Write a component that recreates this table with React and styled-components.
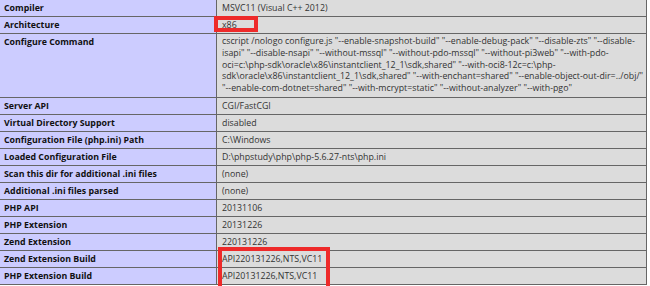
import styled, {createGlobalStyle} from "styled-components";

const GlobalStyle = createGlobalStyle`
  html, body {
    margin: 0;
    padding: 0;
    background: #fff;
    overflow: hidden;
  }
`;

const Page = styled.div`
  position: relative;
  width: 650px;
  height: 286px;
  overflow: hidden;
  font-family: "Open Sans", "Noto Sans", sans-serif;
  font-size: 8.8px;
`;

const InfoTable = styled.div`
  display: grid;
  grid-template-columns: 216px 429px;
  gap: 1px;
  padding: 1px;
  width: max-content;
  margin: -1px 0 0 -1px;
  background: #666;
`;

const Label = styled.div`
  background: #ccccff;
  color: #111;
  font-weight: 700;
  line-height: 12px;
  padding: 2px 4px;
  white-space: nowrap;
`;

const Value = styled.div`
  background: #dcdcdc;
  color: #333;
  line-height: ${props => props.$tight ? "11.8px" : "12px"};
  padding: 2px 5px;
  white-space: nowrap;
`;

const Highlight = styled.div`
  position: absolute;
  left: ${props => props.$left}px;
  top: ${props => props.$top}px;
  width: ${props => props.$width}px;
  height: ${props => props.$height}px;
  box-sizing: border-box;
  border: 4px solid #ee2a2a;
  pointer-events: none;
`;

const configureLines = [
  'cscript /nologo configure.js "--enable-snapshot-build" "--enable-debug-pack" "--disable-zts" "--disable-',
  'isapi" "--disable-nsapi" "--without-mssql" "--without-pdo-mssql" "--without-pi3web" "--with-pdo-',
  'oci=c:\\php-sdk\\oracle\\x86\\instantclient_12_1\\sdk,shared" "--with-oci8-12c=c:\\php-',
  'sdk\\oracle\\x86\\instantclient_12_1\\sdk,shared" "--with-enchant=shared" "--enable-object-out-dir=../obj/"',
  '"--enable-com-dotnet=shared" "--with-mcrypt=static" "--without-analyzer" "--with-pgo"',
];

const rows = [
  ["Compiler", "MSVC11 (Visual C++ 2012)"],
  ["Architecture", "x86"],
  ["Configure Command", configureLines],
  ["Server API", "CGI/FastCGI"],
  ["Virtual Directory Support", "disabled"],
  ["Configuration File (php.ini) Path", "C:\\Windows"],
  ["Loaded Configuration File", "D:\\phpstudy\\php\\php-5.6.27-nts\\php.ini"],
  ["Scan this dir for additional .ini files", "(none)"],
  ["Additional .ini files parsed", "(none)"],
  ["PHP API", "20131106"],
  ["PHP Extension", "20131226"],
  ["Zend Extension", "220131226"],
  ["Zend Extension Build", "API220131226,NTS,VC11"],
  ["PHP Extension Build", "API20131226,NTS,VC11"],
];

export default function App() {
  return (
    <Page>
      <GlobalStyle />
      <InfoTable>
        {rows.map(([label, value]) => (
          <div key={label} style={{display: "contents"}}>
            <Label>{label}</Label>
            {Array.isArray(value) ? (
              <Value $tight>
                {value.map((line, i) => (
                  <div key={i}>{line}</div>
                ))}
              </Value>
            ) : (
              <Value>{value}</Value>
            )}
          </div>
        ))}
      </InfoTable>
      <Highlight $left={214} $top={16} $width={44} $height={16} />
      <Highlight $left={218} $top={247} $width={112} $height={50} />
    </Page>
  );
}
